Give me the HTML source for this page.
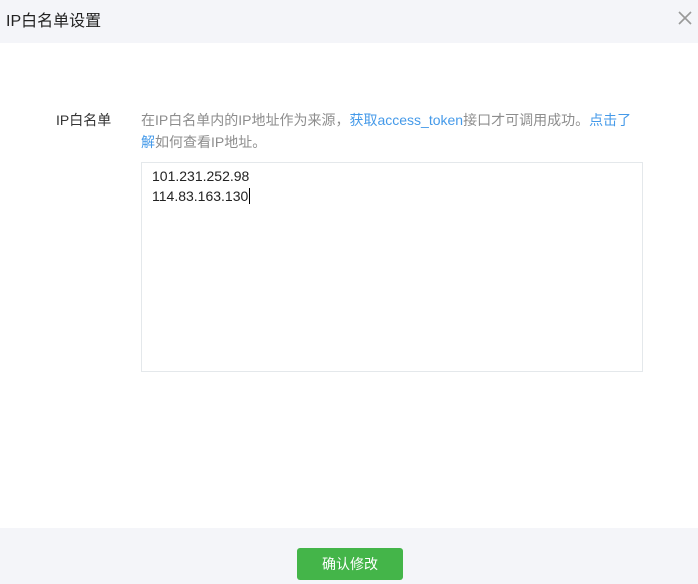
<!DOCTYPE html>
<html><head><meta charset="utf-8"><style>
body{margin:0;width:698px;height:584px;background:#fff;font-family:"Liberation Sans","Noto Sans CJK SC",sans-serif;position:relative;overflow:hidden}
.hd{position:absolute;left:0;top:0;width:698px;height:43px;background:#f4f5f9}
.hd .t{position:absolute;left:6px;top:7px;font-size:16px;color:#222}
.x{position:absolute;left:676px;top:9px;width:18px;height:18px}
.lab{position:absolute;left:56px;top:110px;font-size:14px;color:#333}
.tip{position:absolute;left:141px;top:109px;width:500px;font-size:14px;line-height:22px;color:#8d8d8d}
.tip a{color:#459ae9}
.ta{position:absolute;left:141px;top:162px;width:500px;height:208px;border:1px solid #e4e8eb;font-size:14px;line-height:20px;color:#222}
.ta div{padding:3px 10px}
.ft{position:absolute;left:0;top:528px;width:698px;height:56px;background:#f4f5f9}
.btn{position:absolute;left:297px;top:548px;width:106px;height:32px;background:#44b549;border-radius:3px;color:#fff;font-size:14px;text-align:center;line-height:32px}
</style></head><body>
<div class="hd"><span class="t">IP白名单设置</span>
<svg class="x" viewBox="0 0 18 18"><path d="M3 3L15 15M15 3L3 15" stroke="#999" stroke-width="1.6"/></svg></div>
<div class="lab">IP白名单</div>
<div class="tip">在IP白名单内的IP地址作为来源，<a>获取access_token</a>接口才可调用成功。<a>点击了解</a>如何查看IP地址。</div>
<div class="ta"><div>101.231.252.98<br>114.83.163.130<span style="border-left:1px solid #000;margin-left:1px"></span></div></div>
<div class="ft"></div>
<div class="btn">确认修改</div>
</body></html>
